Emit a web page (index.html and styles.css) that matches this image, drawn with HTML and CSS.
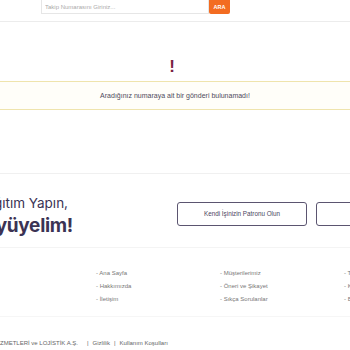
FILE: index.html
```html
<!DOCTYPE html>
<html lang="tr">
<head>
<meta charset="utf-8">
<link rel="stylesheet" href="styles.css">
</head>
<body>
<header class="header">
  <div class="wrap header-inner">
    <form class="search">
      <input class="search-input" type="text" placeholder="Takip Numarasını Giriniz...">
      <button class="search-btn" type="button">ARA</button>
    </form>
  </div>
</header>

<main class="result">
  <div class="mark">!</div>
  <div class="alert">Aradığınız numaraya ait bir gönderi bulunamadı!</div>
</main>

<section class="banner">
  <div class="wrap banner-inner">
    <div class="banner-text">
      <div class="banner-line1">Bizimle Dağıtım Yapın,</div>
      <div class="banner-line2">Birlikte Büyüyelim!</div>
    </div>
    <div class="banner-actions">
      <a class="outline-btn">Kendi İşinizin Patronu Olun</a>
      <a class="outline-btn">Bayimiz Olun</a>
    </div>
  </div>
</section>

<footer class="footer">
  <div class="wrap links">
    <div></div>
    <ul class="link-col">
      <li>- Ana Sayfa</li>
      <li>- Hakkımızda</li>
      <li>- İletişim</li>
    </ul>
    <ul class="link-col">
      <li>- Müşterilerimiz</li>
      <li>- Öneri ve Şikayet</li>
      <li>- Sıkça Sorulanlar</li>
    </ul>
    <ul class="link-col">
      <li>- Takip</li>
      <li>- Kargo</li>
      <li>- Bayilik</li>
    </ul>
  </div>
</footer>

<div class="bottom">
  <div class="wrap bottom-inner">
    <div class="copy"><span>© 2023 Tüm Hakları Saklıdır. KARGO HİZMETLERİ ve LOJİSTİK A.Ş.</span></div>
    <div class="legal"><span class="sep">|</span>Gizlilik<span class="sep">|</span>Kullanım Koşulları</div>
  </div>
</div>
</body>
</html>
```

FILE: styles.css
```css
html, body {
  margin: 0;
  padding: 0;
  overflow: hidden;
  background: #ffffff;
  font-family: "Liberation Sans", Arial, sans-serif;
  color: #555;
}

.wrap {
  width: 542px;
  flex: none;
}

.header {
  display: flex;
  justify-content: center;
  height: 21px;
  border-bottom: 1px solid #ececec;
}

.header-inner {
  display: flex;
  padding-left: 137px;
  box-sizing: border-box;
}

.search {
  display: flex;
  align-items: flex-start;
  margin: 0;
}

.search-input {
  width: 168px;
  height: 14px;
  box-sizing: border-box;
  margin: 0;
  padding: 0 3px;
  border: 1px solid #e6e6e6;
  border-top: none;
  font-family: "Liberation Sans", Arial, sans-serif;
  font-size: 6px;
  color: #999;
  outline: none;
}

.search-input::placeholder {
  color: #aaa;
}

.search-btn {
  width: 21px;
  height: 14px;
  margin: 0;
  padding: 0;
  border: none;
  border-radius: 0 0 2px 2px;
  background: #f36c21;
  color: #fff;
  font-family: "Liberation Sans", Arial, sans-serif;
  font-weight: bold;
  font-size: 5.5px;
}

.result {
  display: flex;
  flex-direction: column;
  align-items: center;
  padding-top: 35px;
  height: 116px;
  border-bottom: 1px solid #f0f0f0;
}

.mark {
  font-family: "Liberation Sans", Arial, sans-serif;
  font-weight: bold;
  font-size: 17px;
  line-height: 20px;
  color: #7a2343;
  margin-left: -6px;
}

.alert {
  align-self: stretch;
  margin-top: 4px;
  height: 27px;
  display: flex;
  align-items: center;
  justify-content: center;
  border-top: 1px solid #efe4ad;
  border-bottom: 1px solid #efe4ad;
  background: #fffef9;
  font-size: 7px;
  color: #4e4a5c;
}

.banner {
  display: flex;
  justify-content: center;
  height: 73px;
  border-bottom: 1px solid #f4f4f4;
}

.banner-inner {
  display: flex;
  align-items: center;
  gap: 104px;
  padding-top: 12px;
  box-sizing: border-box;
}

.banner-text {
  width: 169px;
  flex: none;
  font-family: Inter, "Liberation Sans", sans-serif;
  color: #3b3354;
  display: flex;
  flex-direction: column;
  align-items: flex-end;
}

.banner-line1 {
  font-size: 13.5px;
  line-height: 17px;
  white-space: nowrap;
  margin-right: 5px;
}

.banner-line2 {
  font-size: 19px;
  font-weight: bold;
  line-height: 24px;
  margin-top: 2px;
  white-space: nowrap;
  letter-spacing: -0.3px;
}

.banner-actions {
  display: flex;
  gap: 9px;
  margin-top: -6px;
}

.outline-btn {
  width: 130px;
  height: 24px;
  box-sizing: border-box;
  border: 1px solid #5b5570;
  border-radius: 3px;
  display: flex;
  align-items: center;
  justify-content: center;
  font-size: 6.3px;
  color: #4a4560;
  white-space: nowrap;
}

.footer {
  display: flex;
  justify-content: center;
  height: 68px;
  border-bottom: 1px solid #f6f6f6;
}

.links {
  display: grid;
  grid-template-columns: 192px repeat(3, 124px);
  padding-top: 22px;
  box-sizing: border-box;
}

.link-col {
  list-style: none;
  margin: 0;
  padding: 0;
  display: flex;
  flex-direction: column;
  gap: 6px;
  font-size: 6px;
  line-height: 7px;
  color: #777;
  white-space: nowrap;
}

.bottom {
  display: flex;
  justify-content: center;
}

.bottom-inner {
  display: flex;
  align-items: center;
  padding-top: 23px;
  font-size: 6px;
  color: #666;
  white-space: nowrap;
  box-sizing: border-box;
}

.copy {
  width: 174px;
  display: flex;
  justify-content: flex-end;
  flex: none;
}

.legal {
  margin-left: 9px;
  display: flex;
  align-items: center;
}

.sep {
  margin: 0 4px;
}

.sep:first-child {
  margin-left: 0;
}
```
